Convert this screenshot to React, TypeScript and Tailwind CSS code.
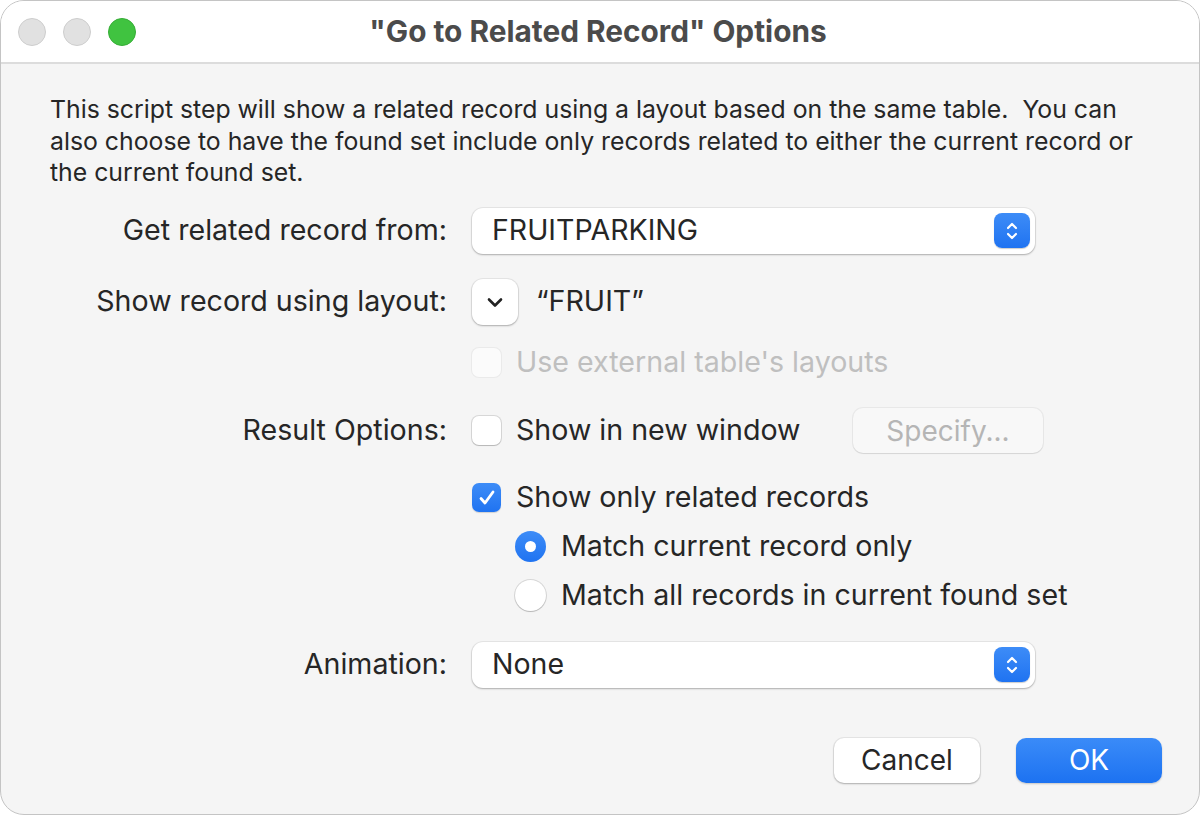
import type { ReactNode } from "react";

const font = { fontFamily: "Inter, 'Liberation Sans', sans-serif" };

function Stepper() {
  return (
    <div className="flex h-[35px] w-[36px] items-center justify-center rounded-[8px] bg-gradient-to-b from-[#3d8cf7] to-[#1f73f1] shadow-[0_1px_1px_rgba(0,0,0,0.2)]">
      <svg width="14" height="24" viewBox="0 0 14 24" fill="none">
        <path d="M3 9l4-4 4 4" stroke="white" strokeWidth="2.2" strokeLinecap="round" strokeLinejoin="round" />
        <path d="M3 15l4 4 4-4" stroke="white" strokeWidth="2.2" strokeLinecap="round" strokeLinejoin="round" />
      </svg>
    </div>
  );
}

function Popup({ value }: { value: string }) {
  return (
    <div className="flex h-[46px] w-[563px] items-center justify-between rounded-[11px] bg-white pl-[20px] pr-[5px] text-[28.5px] text-[#262626] shadow-[0_0_0_1px_rgba(0,0,0,0.06),0_1px_2px_rgba(0,0,0,0.25)]">
      <span>{value}</span>
      <Stepper />
    </div>
  );
}

function Checkbox({ checked, disabled }: { checked?: boolean; disabled?: boolean }) {
  if (checked) {
    return (
      <div className="flex h-[29px] w-[29px] shrink-0 items-center justify-center rounded-[7px] bg-gradient-to-b from-[#3d8cf7] to-[#1f73f1] shadow-[0_1px_1px_rgba(0,0,0,0.15)]">
        <svg width="22" height="22" viewBox="0 0 22 22" fill="none">
          <path d="M5 11.5l4 4.5L17 5" stroke="white" strokeWidth="2.8" strokeLinecap="round" strokeLinejoin="round" />
        </svg>
      </div>
    );
  }
  return (
    <div
      className={`h-[29px] w-[29px] shrink-0 rounded-[7px] bg-white ${
        disabled
          ? "shadow-[0_0_0_1px_rgba(0,0,0,0.07)] opacity-60"
          : "shadow-[0_0_0_1px_rgba(0,0,0,0.12),0_1px_1px_rgba(0,0,0,0.15)]"
      }`}
    />
  );
}

function Radio({ selected }: { selected?: boolean }) {
  if (selected) {
    return (
      <div className="flex h-[31px] w-[31px] shrink-0 items-center justify-center rounded-full bg-gradient-to-b from-[#3d8cf7] to-[#1f73f1]">
        <div className="h-[11px] w-[11px] rounded-full bg-white" />
      </div>
    );
  }
  return (
    <div className="h-[31px] w-[31px] shrink-0 rounded-full bg-white shadow-[0_0_0_1px_rgba(0,0,0,0.12),0_1px_1px_rgba(0,0,0,0.15)]" />
  );
}

function Row({ label, className, children }: { label?: string; className: string; children: ReactNode }) {
  return (
    <div className={`flex items-center ${className}`}>
      <div className="w-[446px] whitespace-nowrap text-right text-[28.6px] text-[#262626]">{label}</div>
      <div className="ml-[25px] flex items-center whitespace-nowrap">{children}</div>
    </div>
  );
}

const txt = "text-[28.6px] text-[#262626]";

export default function App() {
  return (
    <div className="h-[815px] w-[1200px] bg-white" style={font}>
      <div className="flex h-full w-full flex-col overflow-hidden rounded-[24px] border border-[#c4c4c4] bg-[#f5f5f5]">
        <div className="relative flex h-[63px] shrink-0 items-center border-b-2 border-[#dcdcdc] bg-white">
          <div className="absolute left-[17px] flex gap-[17px]">
            <div className="h-[28px] w-[28px] rounded-full border border-[#cdcdcd] bg-[#e1e1e1]" />
            <div className="h-[28px] w-[28px] rounded-full border border-[#cdcdcd] bg-[#e1e1e1]" />
            <div className="h-[28px] w-[28px] rounded-full border border-[#36ad36] bg-[#40c340]" />
          </div>
          <div className="w-full pr-[4px] text-center text-[29.8px] font-bold text-[#4b4b4b]">
            "Go to Related Record" Options
          </div>
        </div>

        <div className="flex flex-col">
          <p className="ml-[49px] mt-[30px] whitespace-nowrap text-[24.8px] leading-[31.5px] text-[#262626]">
            This script step will show a related record using a layout based on the same table.&nbsp; You can
            <br />
            also choose to have the found set include only records related to either the current record or
            <br />
            the current found set.
          </p>

          <Row label="Get related record from:" className="mt-[19px] h-[46px]">
            <Popup value="FRUITPARKING" />
          </Row>

          <Row label="Show record using layout:" className="mt-[25px] h-[46px]">
            <div className="flex h-[46px] w-[46px] items-center justify-center rounded-[11px] bg-white shadow-[0_0_0_1px_rgba(0,0,0,0.06),0_1px_2px_rgba(0,0,0,0.25)]">
              <svg width="20" height="20" viewBox="0 0 20 20" fill="none">
                <path d="M4 7.5l6 6 6-6" stroke="#222" strokeWidth="2.6" strokeLinecap="round" strokeLinejoin="round" />
              </svg>
            </div>
            <span className={`ml-[18px] ${txt}`}>“FRUIT”</span>
          </Row>

          <Row className="mt-[23px] h-[30px]">
            <Checkbox disabled />
            <span className="ml-[15px] text-[28.6px] text-[#bfbfbf]">Use external table's layouts</span>
          </Row>

          <Row label="Result Options:" className="mt-[30px] h-[46px]">
            <Checkbox />
            <span className={`ml-[15px] w-[337px] ${txt}`}>Show in new window</span>
            <div className="flex h-[45px] w-[190px] items-center justify-center rounded-[10px] bg-[#f8f8f8] text-[28px] text-[#b5b5b5] shadow-[0_0_0_1px_rgba(0,0,0,0.05),0_1px_1px_rgba(0,0,0,0.08)]">
              Specify...
            </div>
          </Row>

          <Row className="mt-[29px] h-[30px]">
            <Checkbox checked />
            <span className={`ml-[15px] ${txt}`}>Show only related records</span>
          </Row>

          <Row className="mt-[19px] h-[30px]">
            <div className="ml-[43px] flex items-center">
              <Radio selected />
              <span className={`ml-[15px] ${txt}`}>Match current record only</span>
            </div>
          </Row>

          <Row className="mt-[19px] h-[30px]">
            <div className="ml-[43px] flex items-center">
              <Radio />
              <span className={`ml-[15px] ${txt}`}>Match all records in current found set</span>
            </div>
          </Row>

          <Row label="Animation:" className="mt-[31px] h-[46px]">
            <Popup value="None" />
          </Row>

          <div className="mt-[50px] flex justify-end gap-[36px] pr-[37px]">
            <div className="flex h-[45px] w-[146px] items-center justify-center rounded-[10px] bg-white text-[28px] text-[#262626] shadow-[0_0_0_1px_rgba(0,0,0,0.06),0_1px_2px_rgba(0,0,0,0.25)]">
              Cancel
            </div>
            <div className="flex h-[45px] w-[146px] items-center justify-center rounded-[10px] bg-gradient-to-b from-[#3a8bf8] to-[#1c72f1] text-[28px] text-white shadow-[0_1px_2px_rgba(0,0,0,0.2)]">
              OK
            </div>
          </div>
        </div>
      </div>
    </div>
  );
}
